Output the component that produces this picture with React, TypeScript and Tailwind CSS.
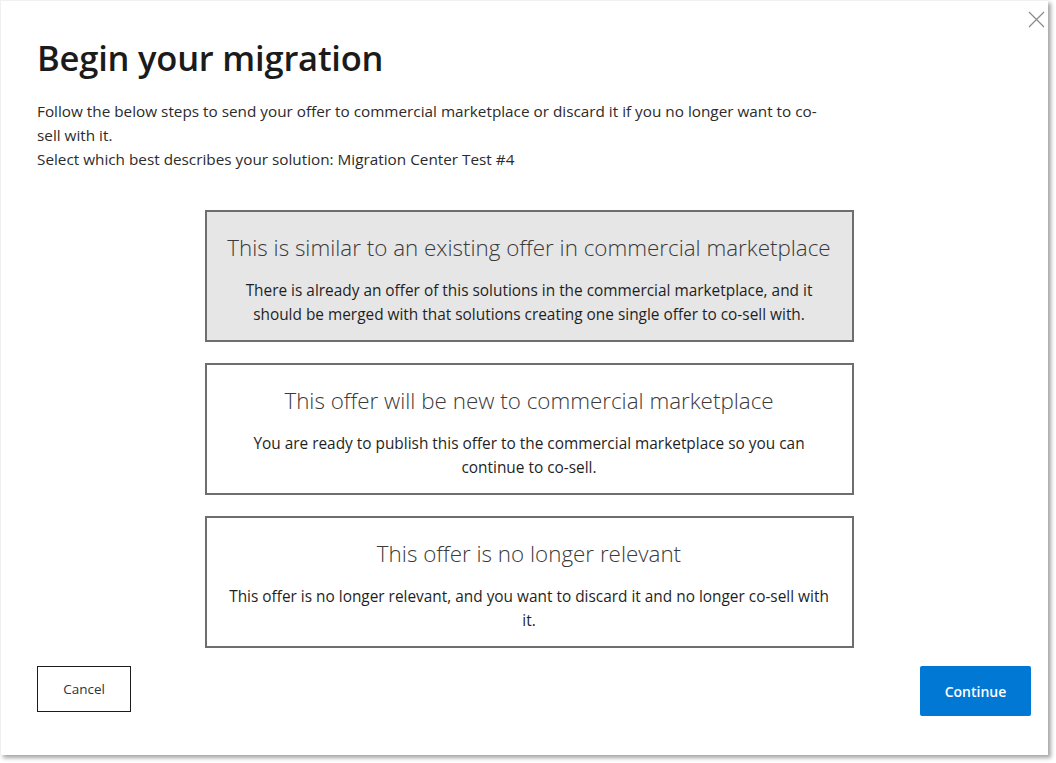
import React from "react";

const cards = [
  {
    title: "This is similar to an existing offer in commercial marketplace",
    desc: "There is already an offer of this solutions in the commercial marketplace, and it should be merged with that solutions creating one single offer to co-sell with.",
    selected: true,
  },
  {
    title: "This offer will be new to commercial marketplace",
    desc: "You are ready to publish this offer to the commercial marketplace so you can continue to co-sell.",
    selected: false,
  },
  {
    title: "This offer is no longer relevant",
    desc: "This offer is no longer relevant, and you want to discard it and no longer co-sell with it.",
    selected: false,
  },
];

export default function App() {
  return (
    <div
      className="w-[1056px] h-[763px] bg-white overflow-hidden"
      style={{ fontFamily: '"Open Sans", "Noto Sans", sans-serif' }}
    >
      <div className="relative w-[1048px] h-[755px] bg-white border-t border-l border-[#f0f0f0] shadow-[3px_3px_4px_rgba(0,0,0,0.35)] flex flex-col">
        <button className="absolute right-[3px] top-[9px] w-[18px] h-[18px] flex items-center justify-center">
          <svg width="17" height="17" viewBox="0 0 17 17" fill="none">
            <path d="M1 1L16 16M16 1L1 16" stroke="#8a8a8a" strokeWidth="1.2" />
          </svg>
        </button>
        <div className="pl-[36px] pt-[34px]">
          <h1 className="text-[34.5px] leading-[46px] font-semibold text-[#1b1b1b] tracking-[-0.2px]">
            Begin your migration
          </h1>
          <div className="mt-[18px] w-[800px] text-[15.3px] leading-[24px] text-[#2b2b2b]">
            <p>
              Follow the below steps to send your offer to commercial marketplace or discard it if you no longer want to co-sell with it.
            </p>
            <p>Select which best describes your solution: Migration Center Test #4</p>
          </div>
        </div>
        <div className="mt-[39px] flex flex-col items-center gap-[21px] pl-[9px]">
          {cards.map((c) => (
            <div
              key={c.title}
              className={`w-[649px] h-[132px] border-2 border-[#6e6e6e] flex flex-col items-center pt-[19px] text-center ${
                c.selected ? "bg-[#e6e6e6]" : "bg-white"
              }`}
            >
              <div className="text-[22.4px] leading-[34px] font-light text-[#3a3a3a] whitespace-nowrap">{c.title}</div>
              <div className="mt-[14px] text-[15.4px] leading-[24px] text-[#1f1f1f] w-[604px]">{c.desc}</div>
            </div>
          ))}
        </div>
        <div className="mt-[18px] px-[36px] pr-[17px] flex justify-between items-start">
          <button className="w-[94px] h-[46px] border border-[#1b1b1b] text-[13.5px] text-[#333] bg-white">
            Cancel
          </button>
          <button className="w-[111px] h-[50px] bg-[#0078d4] rounded-[2px] text-[14px] font-semibold text-white">
            Continue
          </button>
        </div>
      </div>
    </div>
  );
}
